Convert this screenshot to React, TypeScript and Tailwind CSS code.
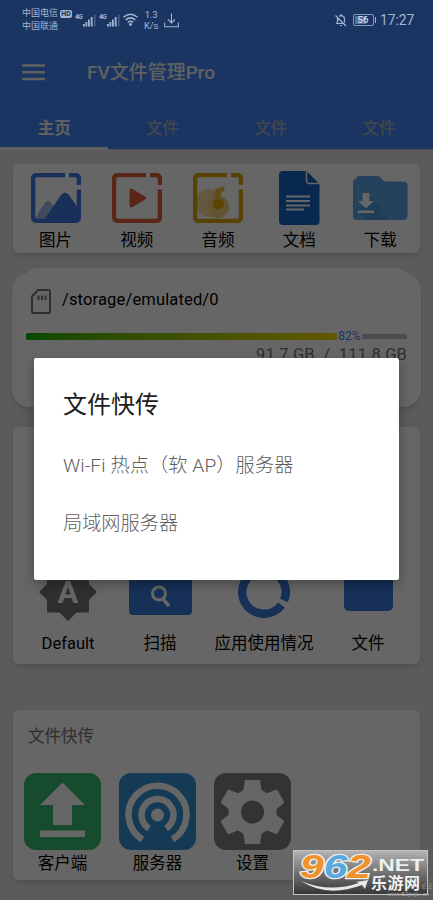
import { ReactNode } from "react";

const mediaItems = [
  { label: "图片", icon: <ImageIcon /> },
  { label: "视频", icon: <VideoIcon /> },
  { label: "音频", icon: <AudioIcon /> },
  { label: "文档", icon: <DocIcon /> },
  { label: "下载", icon: <DownloadIcon /> },
];

const tabs = ["主页", "文件", "文件", "文件"];

function Frame({ color, children }: { color: string; children: ReactNode }) {
  return (
    <svg width="50" height="50" viewBox="0 0 50 50" fill="none">
      {children}
      <path
        d="M34 2H6a4 4 0 0 0-4 4v38a4 4 0 0 0 4 4h38a4 4 0 0 0 4-4V16.5M38 2h6a4 4 0 0 1 4 4v6"
        stroke={color}
        strokeWidth="4.500"
      />
    </svg>
  );
}

function ImageIcon() {
  return (
    <Frame color="#3f78e0">
      <path d="M3 47 13 31q4-6 8 0l6 16z" fill="#9db9ee" />
      <path d="M13 47 30 22q4-5 8 0l11 16v9z" fill="#3f78e0" />
    </Frame>
  );
}

function VideoIcon() {
  return (
    <Frame color="#e25f3c">
      <path d="M17.5 18q0-3.500 3-2l12.500 7.500q2 1.500 0 3L20.500 34q-3 1.500-3-2z" fill="#e25f3c" />
    </Frame>
  );
}

function AudioIcon() {
  return (
    <Frame color="#dca80c">
      <circle cx="16" cy="30" r="14" fill="#f6dfa0" />
      <circle cx="25" cy="34" r="11" fill="#f3d27a" />
      <circle cx="25.500" cy="31" r="5.500" fill="#e8a80c" />
      <path d="M23 27q-3-4-1.500-9 1-3.500 4.500-3l4-1.500q3 1.500 1 4.500l-3 1.500v8z" fill="#f0c040" />
    </Frame>
  );
}

function DocIcon() {
  return (
    <svg width="41" height="54" viewBox="0 0 41 54">
      <path d="M4 0h23.500L40.500 13v37a4 4 0 0 1-4 4H4a4 4 0 0 1-4-4V4a4 4 0 0 1 4-4z" fill="#1565c8" />
      <path d="M27.500 0v9.500a3 3 0 0 0 3 3h10" stroke="#fff" strokeWidth="1.500" fill="none" />
      <path d="M7 25.500h24M7 30h24M7 34.500h24M7 38.500h18" stroke="#fff" strokeWidth="2" />
    </svg>
  );
}

function DownloadIcon() {
  return (
    <svg width="55" height="44" viewBox="0 0 55 44">
      <path
        d="M5 0h19q2 0 3 1l4.500 4.500h19a4 4 0 0 1 4 4V40a4 4 0 0 1-4 4H4a4 4 0 0 1-4-4V5z"
        fill="#5aa5e6"
      />
      <path d="m16 17 20 27H14l-8-8z" fill="#4f98d8" />
      <path d="M9.500 17h7v8h4.500L13 32.500 5 25h4.500zM5 34.500h16v2.500H5z" fill="#fff" />
    </svg>
  );
}

function SdCardIcon() {
  return (
    <svg width="20" height="25" viewBox="0 0 20 25" fill="none" stroke="#757575">
      <path d="M7 1h10.500q1.500 0 1.500 1.500v20q0 1.500-1.500 1.500h-15Q1 24 1 22.500V7.500z" strokeWidth="2" />
      <path d="M7.500 6.500V11M11 6.500V11M14.500 6.500V11" strokeWidth="2" />
    </svg>
  );
}

function Signal() {
  return (
    <div className="flex w-[21px]">
      <span className="w-[8px] text-[6.500px] leading-[8px] font-bold tracking-[-.4px]">4G</span>
      <svg className="mt-px" width="13" height="13" viewBox="0 0 13 13" fill="currentColor">
        <path d="M0 10h1.800v2.500H0zM2.500 8h1.800v4.500H2.500zM5 5.500h1.800v7H5zM7.800 3h1.800v9.500H7.800z" />
        <path d="M11 .5h1.500v12H11z" opacity=".35" />
      </svg>
    </div>
  );
}

function StatusBar() {
  return (
    <div className="relative z-20 flex h-[40px] items-center pl-[22px] pr-[19px] text-[#a3b4ce]">
      <div className="h-[26px] w-[50px] text-[9px] leading-[13px]">
        <div className="flex items-center gap-[2px]">
          <span className="whitespace-nowrap">中国电信</span>
          <span className="h-[8px] w-[12px] shrink-0 rounded-[2px] bg-[#a3b4ce] text-center text-[7px] leading-[8px] font-bold text-[#1a3562]">
            HD
          </span>
        </div>
        <div>中国联通</div>
      </div>
      <div className="ml-[3px] flex gap-[3px]">
        <Signal />
        <Signal />
      </div>
      <svg className="ml-[3px] -mt-px" width="15" height="13" viewBox="0 0 15 13" fill="none" stroke="currentColor" strokeWidth="1.500">
        <path d="M.5 4.200q7-6 14 0M2.700 6.900q4.800-4 9.600 0M4.900 9.400q2.600-2.200 5.200 0" />
        <circle cx="7.500" cy="11.500" r=".7" />
      </svg>
      <div className="ml-[5px] -mt-px w-[16px] text-center text-[9.500px] leading-[11px] tracking-[-.2px]">
        <div>1.3</div>
        <div>K/s</div>
      </div>
      <svg className="ml-[5px]" width="15" height="15" viewBox="0 0 15 15" fill="none" stroke="currentColor">
        <path d="M7.500.5v9M4 6.500 7.500 10 11 6.500M.7 9.500v4.300h13.600V9.500" strokeWidth="1.100" />
      </svg>
      <svg className="ml-auto" width="12" height="13" viewBox="0 0 12 13" fill="none" stroke="currentColor">
        <path d="M.5 1.500 11 12M2.500 4v5.500H1M2.500 9.500h6M9.500 8.500V5q0-3-3.500-3.300Q5 1.700 4 2.300M6 0v1.500M5 11.500h2" strokeWidth="1.200" />
      </svg>
      <div className="ml-[6px] flex items-center gap-px">
        <div className="flex h-[12px] w-[21px] items-center rounded-[2px] border border-[#8397b8] p-px">
          <div className="flex h-full w-[11px] items-center bg-[#5b739b] pl-[3px] text-[9.500px] font-medium text-[#d5deeb]">
            56
          </div>
        </div>
        <div className="h-[6px] w-[1.500px] bg-[#a3b4ce]" />
      </div>
      <div className="ml-[4px] w-[34px] whitespace-nowrap text-[13.800px]">17:27</div>
    </div>
  );
}

function Header() {
  return (
    <div className="h-[150px] bg-[#4285f4]">
      <StatusBar />
      <div className="flex h-[65px] items-center pl-[22px]">
        <svg width="23" height="17" viewBox="0 0 23 17" stroke="#f0f0f0" strokeWidth="2.500">
          <path d="M0 1.500h23M0 8.250h23M0 15h23" />
        </svg>
        <div className="ml-[42px] pt-[2px] text-[19px] font-medium text-[#f0f0f0]">FV文件管理Pro</div>
      </div>
      <div className="grid grid-cols-4 text-center text-[16.500px] leading-[47px]">
        {tabs.map((tab, i) => (
          <div
            key={i}
            className={
              i === 0
                ? "h-[45px] border-b-[3px] border-[#f0f0f0] font-bold text-[#f0f0f0]"
                : "h-[45px] border-b border-[#c4ccd8] font-medium text-[#a8b2c4]"
            }
          >
            {tab}
          </div>
        ))}
      </div>
    </div>
  );
}

function MediaCard() {
  return (
    <div className="mx-[13px] mt-[14px] flex h-[89px] rounded-[6px] bg-white pl-[2px] shadow-md">
      {mediaItems.map((item) => (
        <div key={item.label} className="flex w-[81.200px] shrink-0 flex-col items-center">
          <div className="flex h-[67px] items-center">{item.icon}</div>
          <div className="text-[16.500px] leading-[19px]">{item.label}</div>
        </div>
      ))}
    </div>
  );
}

function StorageCard() {
  return (
    <div className="relative mx-[12px] mt-[20px] h-[134px]">
      <div className="absolute inset-x-[9px] -top-[5px] bottom-[6px] rounded-[18px] bg-white shadow-xs" />
      <div className="relative h-full rounded-[18px] bg-white pl-[14px] pr-[14px] pt-[14px] shadow-md">
        <div className="flex h-[28px] items-center gap-[11px] pl-[5px]">
          <SdCardIcon />
          <span className="pb-[2px] text-[16.500px] tracking-[.15px]">/storage/emulated/0</span>
        </div>
        <div className="mt-[15px] flex h-[12px] items-center">
          <div className="h-[7px] w-[311px] rounded-[2px] bg-linear-to-r from-[#00b400] to-[#f5dc00]" />
          <span className="w-[25px] text-center text-[12px] leading-[12px] text-[#4285f4]">82%</span>
          <div className="h-[5px] flex-1 bg-[#bdbdbd]" />
        </div>
        <div className="mt-[2px] whitespace-pre text-right text-[16.500px] leading-[22px] tracking-[.15px] text-[#757575]">
          {"91.7 GB  /  111.8 GB"}
        </div>
      </div>
    </div>
  );
}

function ToolsCard() {
  return (
    <div className="mx-[13px] mt-[20px] flex h-[237px] items-end rounded-[6px] bg-white pb-[9px] pl-[9px] text-[16.500px] leading-[22px] shadow-md">
      <div className="flex w-[92px] flex-col items-center gap-[12px]">
        <svg width="58" height="58" viewBox="0 0 58 58">
          <path d="M29 0l8.500 8.500H50V21l8 8-8 8v12.500H37.500L29 58l-8.500-8.500H8V37l-8-8 8-8V8.500h12.500z" fill="#757575" />
          <text x="29" y="39.500" textAnchor="middle" fontSize="31" fontWeight="700" fill="#fff">
            A
          </text>
        </svg>
        <span>Default</span>
      </div>
      <div className="flex w-[92px] flex-col items-center gap-[18px]">
        <svg width="63" height="50" viewBox="0 0 63 50">
          <path d="M4 0h18l6 6h31a4 4 0 0 1 4 4v36a4 4 0 0 1-4 4H4a4 4 0 0 1-4-4V4a4 4 0 0 1 4-4z" fill="#3a78dc" />
          <g stroke="#fff" fill="none">
            <circle cx="30" cy="28.500" r="6.500" strokeWidth="3" />
            <path d="m34 34 6 7" strokeWidth="3.500" />
          </g>
        </svg>
        <span>扫描</span>
      </div>
      <div className="flex w-[116px] flex-col items-center gap-[15px]">
        <svg width="52" height="52" viewBox="0 0 52 52" fill="none" stroke="#3a78dc" strokeWidth="8.500">
          <path d="M43.500 39A21.800 21.800 0 1 1 26 4.200" />
          <path d="M30 4.500A21.800 21.800 0 0 1 46 34.500" />
        </svg>
        <span>应用使用情况</span>
      </div>
      <div className="flex w-[92px] flex-col items-center gap-[22px]">
        <div className="h-[50px] w-[49px] rounded-[5px] bg-[#3a78dc]" />
        <span>文件</span>
      </div>
    </div>
  );
}

function Tile({ label, children }: { label: string; children: ReactNode }) {
  return (
    <div className="flex w-[77px] flex-col items-center">
      {children}
      <div className="mt-[2px] text-[16.500px] leading-[24px]">{label}</div>
    </div>
  );
}

function TransferCard() {
  return (
    <div className="mx-[13px] mt-[46px] h-[170px] rounded-[6px] bg-white pl-[11px] pt-[15px] shadow-md">
      <div className="h-[48px] pl-[4px] text-[16.500px] leading-[24px] text-[#757575]">文件快传</div>
      <div className="flex gap-[18px]">
        <Tile label="客户端">
          <svg width="77" height="77" viewBox="0 0 77 77">
            <rect width="77" height="77" rx="12" fill="#37bd70" />
            <path d="M38.500 9.500 61 32H48v20H29V32H16zM16 57.500h45v6.500H16z" fill="#fff" />
          </svg>
        </Tile>
        <Tile label="服务器">
          <svg width="77" height="77" viewBox="0 0 77 77" fill="none">
            <rect width="77" height="77" rx="12" fill="#3692d8" />
            <g stroke="#fff" strokeWidth="6.500">
              <path d="M23.500 66.500A29 29 0 1 1 53.500 66.500" />
              <path d="M30 55.500A16 16 0 1 1 47 55.500" />
            </g>
            <circle cx="38.500" cy="42" r="6.500" fill="#fff" />
          </svg>
        </Tile>
        <Tile label="设置">
          <svg width="77" height="77" viewBox="0 0 77 77">
            <rect width="77" height="77" rx="12" fill="#808080" />
            <path
              d="M32 7h13q1 0 1.200 1l1.300 9 5.500 3.200 9-3.500q1 0 1.500.5l6.500 11.500q.3 1-.4 1.600L62.500 36v6l7.100 5.500q.7.600.4 1.600l-6.500 11.400q-.5.800-1.500.5l-9-3.500-5.500 3.200-1.300 9.300q-.2 1-1.200 1H32q-1 0-1.200-1l-1.300-9.300-5.500-3.200-9 3.500q-1 .3-1.500-.5L7 49.100q-.3-1 .4-1.600l7.100-5.500v-6l-7.100-5.700Q6.700 29.700 7 28.700l6.500-11.500q.5-.5 1.500-.5l9 3.500 5.500-3.200 1.300-9q.2-1 1.200-1z"
              fill="#fff"
            />
            <circle cx="38.500" cy="39" r="11.500" fill="#808080" />
          </svg>
        </Tile>
      </div>
    </div>
  );
}

function Dialog() {
  return (
    <div className="absolute inset-0 z-10 bg-black/60 pt-[358px]">
      <div className="ml-[34px] h-[222px] w-[365px] rounded-[2px] bg-white pl-[29px] pt-[31px] shadow-[0_4px_12px_rgba(0,0,0,0.3)]">
        <div className="text-[24px] leading-[32px] text-[#1d1d1d]">文件快传</div>
        <div className="mt-[16px] text-[19.200px] leading-[58px] font-light text-[#606060]">
          <div className="whitespace-nowrap tracking-[.1px]">Wi-Fi 热点（软 AP）服务器</div>
          <div>局域网服务器</div>
        </div>
      </div>
    </div>
  );
}

function Watermark() {
  return (
    <div className="absolute left-[293px] top-[850px] z-30">
      <svg
        className="overflow-visible"
        width="140"
        height="50"
        viewBox="0 0 140 50"
        fontFamily="'Liberation Sans', 'Noto Sans CJK SC', sans-serif"
      >
        <defs>
          <linearGradient id="plate" x1="0" y1="0" x2="0" y2="1">
            <stop offset="0" stopColor="#b4b4b4" />
            <stop offset=".55" stopColor="#6c6c6c" />
            <stop offset="1" stopColor="#363636" />
          </linearGradient>
        </defs>
        <rect x=".5" y=".5" width="134" height="44" fill="url(#plate)" stroke="#c4c4c4" />
        <text
          x="7"
          y="27.500"
          fontSize="33"
          fontWeight="700"
          fontStyle="italic"
          stroke="#eee"
          strokeWidth="2.500"
          textLength="71"
          lengthAdjust="spacingAndGlyphs"
          style={{ paintOrder: "stroke" }}
        >
          <tspan fill="#f0912a">9</tspan>
          <tspan fill="#58a9de">6</tspan>
          <tspan fill="#f0912a">2</tspan>
        </text>
        <path d="M8 31q28 12 58 2l-3-1 12-2-3 9-3-4Q34 48 8 31z" fill="#e8e8e8" />
        <text x="79" y="21" fontSize="16.500" fontWeight="700" fill="#eee" textLength="52" lengthAdjust="spacingAndGlyphs">
          .NET
        </text>
        <text x="78" y="39" fontSize="16" fontWeight="700" fill="#f2f2f2" textLength="49">乐游网</text>
        <text x="128" y="38" fontSize="5.500" fill="#999">论坛</text>
        <text x="94" y="45.500" fontSize="5" fill="#aaa" textLength="42" lengthAdjust="spacingAndGlyphs">
          www.52pojie.cn
        </text>
      </svg>
    </div>
  );
}

export default function App() {
  return (
    <div className="relative h-[900px] w-[433px] overflow-hidden bg-[#e4e4e4] font-['Roboto','Noto_Sans_CJK_SC',sans-serif] text-black">
      <Header />
      <MediaCard />
      <StorageCard />
      <ToolsCard />
      <TransferCard />
      <Dialog />
      <Watermark />
    </div>
  );
}
